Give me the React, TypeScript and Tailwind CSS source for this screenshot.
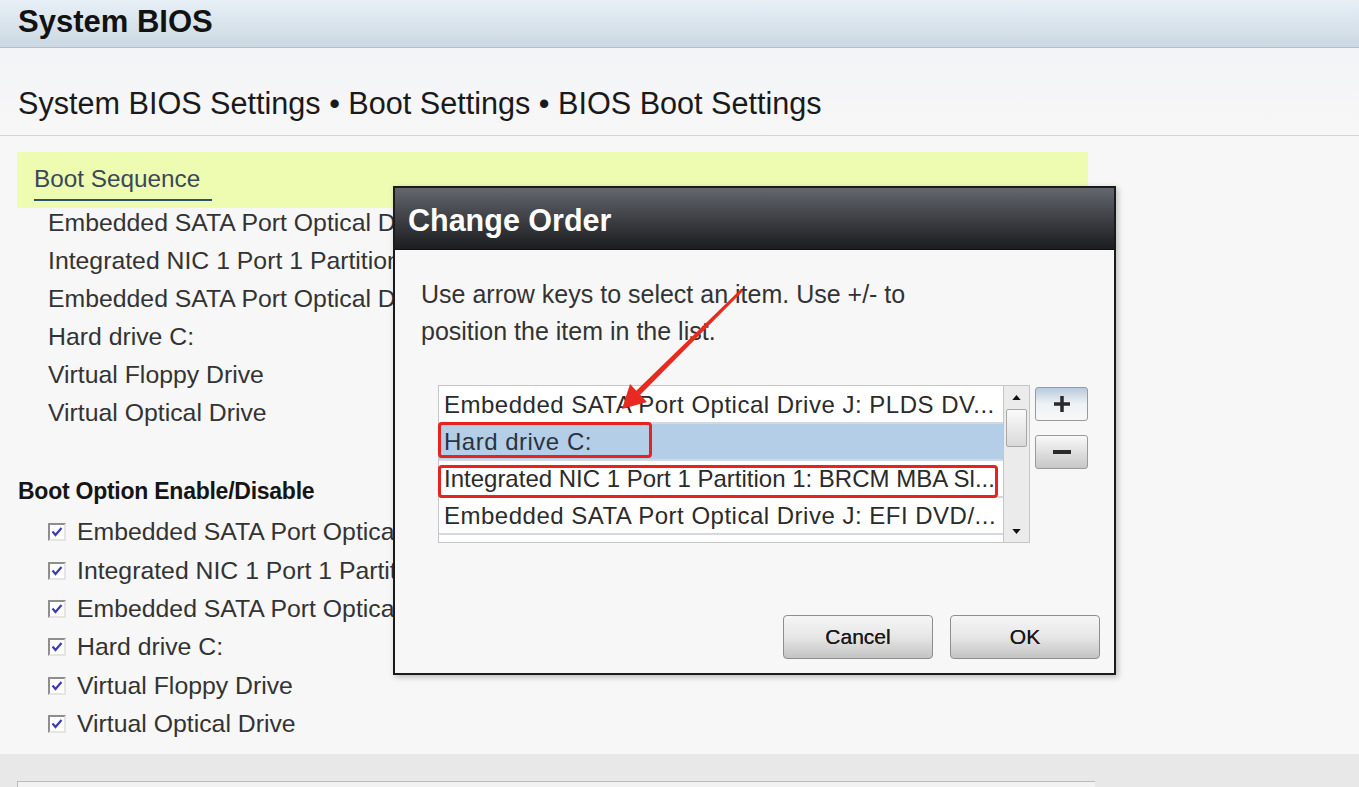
import React from "react";

const bootSequence = [
  "Embedded SATA Port Optical Drive J: PLDS DVD+/-RW DS-8A8SH",
  "Integrated NIC 1 Port 1 Partition 1: BRCM MBA Slot 0100 v17.4.4",
  "Embedded SATA Port Optical Drive J: EFI DVD/CDROM 1",
  "Hard drive C:",
  "Virtual Floppy Drive",
  "Virtual Optical Drive",
];

const orderItems = [
  { label: "Embedded SATA Port Optical Drive J: PLDS DV...", wide: true },
  { label: "Hard drive C:", wide: true },
  { label: "Integrated NIC 1 Port 1 Partition 1: BRCM MBA Sl...", wide: false },
  { label: "Embedded SATA Port Optical Drive J: EFI DVD/...", wide: true },
];

function CheckBox() {
  return (
    <span className="flex h-[18px] w-[18px] shrink-0 items-center justify-center border-2 border-t-[#8e8e8e] border-l-[#8e8e8e] border-r-[#e4e4e4] border-b-[#e4e4e4] bg-white">
      <svg viewBox="0 0 12 12" className="h-[12px] w-[12px]">
        <path d="M1.5 5.5 L4.5 9 L10.5 2" fill="none" stroke="#3c3cb4" strokeWidth="2.2" />
      </svg>
    </span>
  );
}

function ChangeOrderDialog() {
  return (
    <div className="absolute left-[393px] top-[186px] flex h-[489px] w-[723px] flex-col border-2 border-[#1b1b1b] bg-[#f7f7f7] shadow-[2px_2px_6px_rgba(0,0,0,0.25)]">
      {/* title */}
      <div className="flex h-[62px] shrink-0 items-center border-b border-[#111] bg-gradient-to-b from-[#64676f] to-[#1c1d20] pl-[13px]">
        <span className="mt-[4px] text-[30.5px] font-bold leading-none text-white">Change Order</span>
      </div>

      <div className="flex flex-1 flex-col">
        <p className="pl-[26px] pt-[26px] text-[25px] leading-[37px] text-[#333]">
          Use arrow keys to select an item. Use +/- to
          <br />
          position the item in the list.
        </p>

        <div className="ml-[43px] mt-[35px] flex">
          {/* list box */}
          <div className="flex h-[158px] w-[592px] border border-[#c6c6c6] bg-white">
            <div className="flex-1 overflow-hidden pt-[1px]">
              {orderItems.map((item, i) => (
                <div
                  key={i}
                  className={
                    (i === 1
                      ? "bg-[#b4cee7] text-[#2a3340] "
                      : "text-[#2b2b2b] ") +
                    (item.wide ? "tracking-[0.5px] " : "") +
                    "h-[37px] overflow-hidden whitespace-nowrap border-b-2 border-[#d3d9df] pl-[5px] text-[24px] leading-[35px]"
                  }
                >
                  {item.label}
                </div>
              ))}
            </div>
            {/* scrollbar */}
            <div className="flex w-[26px] flex-col items-center border-l border-[#c6c6c6] bg-[#ebebeb]">
              <svg viewBox="0 0 10 6" className="mt-[9px] h-[5px] w-[9px]">
                <path d="M0 6 L5 0 L10 6 Z" fill="#111" />
              </svg>
              <div className="mt-[9px] h-[38px] w-[21px] rounded-[2px] border border-[#a8a8a8] bg-gradient-to-b from-[#fafafa] to-[#d9d9d9]" />
              <div className="flex-1" />
              <svg viewBox="0 0 10 6" className="mb-[8px] h-[5px] w-[9px]">
                <path d="M0 0 L5 6 L10 0 Z" fill="#111" />
              </svg>
            </div>
          </div>

          {/* +/- buttons */}
          <div className="ml-[5px] mt-[2px] flex flex-col gap-[14px]">
            <div className="flex h-[34px] w-[53px] items-center justify-center rounded-[3px] border border-[#9a9a9a] bg-gradient-to-b from-[#b9cadb] via-[#eef2f6] to-[#f7f7f7]">
              <svg viewBox="0 0 20 20" className="h-[20px] w-[20px]">
                <path d="M10 2 V18 M2 10 H18" stroke="#2a2a2a" strokeWidth="3.5" />
              </svg>
            </div>
            <div className="flex h-[34px] w-[53px] items-center justify-center rounded-[3px] border border-[#9a9a9a] bg-gradient-to-b from-[#f9f9f9] to-[#c7c7c7]">
              <svg viewBox="0 0 20 20" className="h-[20px] w-[20px]">
                <path d="M1 10 H19" stroke="#2a2a2a" strokeWidth="4" />
              </svg>
            </div>
          </div>
        </div>

        <div className="mt-auto flex justify-end gap-[17px] pb-[14px] pr-[14px]">
          <button className="h-[44px] w-[150px] rounded-[4px] border border-[#8e8e8e] bg-gradient-to-b from-[#f6f6f6] via-[#e6e6e6] to-[#c4c4c4] text-[21px] text-[#1a1a1a] [text-shadow:0_0_0.4px_#1a1a1a]">
            Cancel
          </button>
          <button className="h-[44px] w-[150px] rounded-[4px] border border-[#8e8e8e] bg-gradient-to-b from-[#f6f6f6] via-[#e6e6e6] to-[#c4c4c4] text-[21px] text-[#1a1a1a] [text-shadow:0_0_0.4px_#1a1a1a]">
            OK
          </button>
        </div>
      </div>
    </div>
  );
}

export default function App() {
  return (
    <div className="relative flex h-[787px] w-full flex-col overflow-hidden bg-[#f7f7f7] font-['Liberation_Sans',Arial,sans-serif] text-[#2e2e2e]">
      {/* Header */}
      <header className="flex h-[48px] shrink-0 items-center border-b border-[#b5bfc7] bg-gradient-to-b from-[#e7f0f7] to-[#ccd8e1] px-[18px] shadow-[0_2px_3px_rgba(0,0,0,0.12)]">
        <h1 className="-mt-[4px] text-[31px] font-bold leading-none text-[#121212]">System BIOS</h1>
      </header>

      {/* Breadcrumb */}
      <div className="h-[88px] shrink-0 border-b border-[#d6d6d6] bg-gradient-to-b from-[#f3f4f7] to-[#f7f7f7] pl-[18px] pt-[38px]">
        <h2 className="whitespace-nowrap text-[30.6px] leading-[34px] text-[#1a1a1a]">
          System BIOS Settings • Boot Settings • BIOS Boot Settings
        </h2>
      </div>

      {/* Boot Sequence */}
      <div className="ml-[17px] mt-[16px] h-[56px] w-[1071px] shrink-0 bg-[#eefcb1] pl-[17px] pt-[12px]">
        <div className="text-[24.3px] leading-[30px] text-[#3a4858]">Boot Sequence</div>
        <div className="mt-[5px] h-[2px] w-[178px] bg-[#2f4f6c]" />
      </div>
      <div className="-mt-[4px] shrink-0">
        {bootSequence.map((item, i) => (
          <div key={i} className="h-[38px] whitespace-nowrap pl-[48px] text-[24.8px] leading-[38px] text-[#333]">
            {item}
          </div>
        ))}
      </div>

      {/* Boot Option Enable/Disable */}
      <div className="mt-[44px] shrink-0 pl-[18px] text-[23px] font-bold leading-[30px] tracking-[-0.25px] text-[#151515]">
        Boot Option Enable/Disable
      </div>
      <div className="mt-[7px] shrink-0">
        {bootSequence.map((item, i) => (
          <div key={i} className="flex h-[38.4px] items-center pl-[48px]">
            <CheckBox />
            <span className="ml-[11px] whitespace-nowrap text-[24.8px] leading-[38px] text-[#333]">{item}</span>
          </div>
        ))}
      </div>

      {/* bottom strip */}
      <div className="mt-auto h-[33px] shrink-0 bg-[#e8e8e8] pl-[17px] pt-[27px]">
        <div className="h-full w-[1078px] border-l border-t border-[#bcbcbc] bg-[#f2f2f2]" />
      </div>

      <ChangeOrderDialog />

      {/* annotations */}
      <div className="absolute left-[438px] top-[422px] h-[36px] w-[214px] rounded-[4px] border-[3px] border-[#e6231c]" />
      <div className="absolute left-[438px] top-[465px] h-[33px] w-[560px] rounded-[4px] border-[3px] border-[#e6231c]" />
      <svg className="pointer-events-none absolute left-0 top-0" width="1359" height="787">
        <polygon points="741,289 743,291 640,395 636,391" fill="#ea2a20" />
        <polygon points="622,409 630,384 647,402" fill="#ea2a20" />
      </svg>
    </div>
  );
}
